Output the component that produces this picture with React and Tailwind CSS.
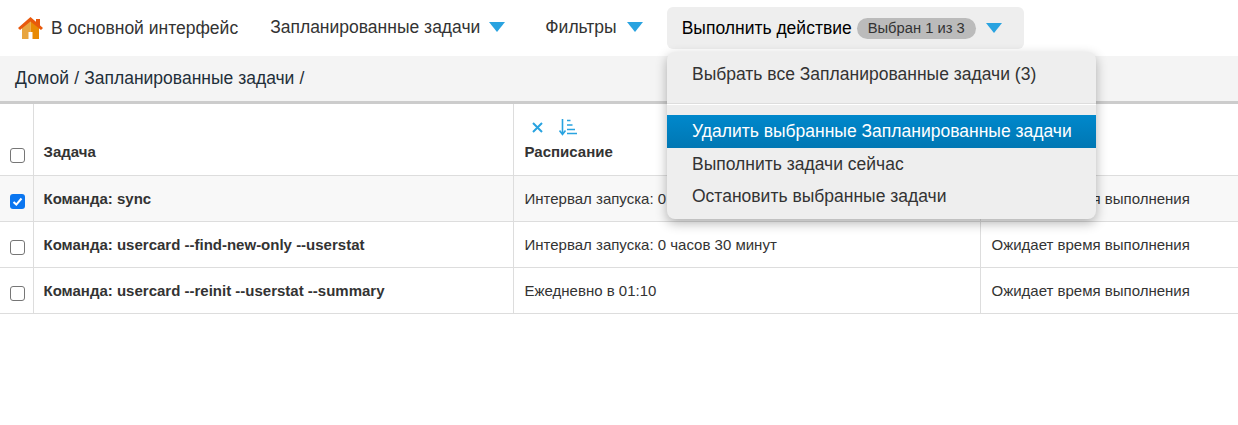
const rows = [
  { name: 'Команда: sync', schedule: 'Интервал запуска: 0 часов 5 минут', status: 'Ожидает время выполнения', checked: true },
  { name: 'Команда: usercard --find-new-only --userstat', schedule: 'Интервал запуска: 0 часов 30 минут', status: 'Ожидает время выполнения', checked: false },
  { name: 'Команда: usercard --reinit --userstat --summary', schedule: 'Ежедневно в 01:10', status: 'Ожидает время выполнения', checked: false },
];

function Caret() {
  return <span className="inline-block h-0 w-0 border-x-[8px] border-t-[10px] border-x-transparent border-t-[#29a3e0]" />;
}

function HomeIcon() {
  return (
    <svg width="25" height="22" viewBox="0 0 25 22" className="shrink-0">
      <rect x="18" y="2" width="4" height="7" fill="#e8590c" />
      <path d="M4 10 L12.5 3 V22 H4 Z" fill="#e8a53f" />
      <path d="M12.5 3 L21 10 V22 H12.5 Z" fill="#e88a05" />
      <rect x="10.5" y="15" width="4" height="7" fill="#fff" />
      <path d="M0 11 L12.5 0 L25 11 L23 13 L12.5 4.5 L2 13 Z" fill="#e8590c" />
    </svg>
  );
}

function Checkbox({ checked }) {
  if (checked) {
    return (
      <span className="flex h-[15px] w-[15px] items-center justify-center rounded-[3px] bg-[#0b76f0]">
        <svg width="11" height="11" viewBox="0 0 11 11">
          <path d="M1.5 6 L4.3 8.6 L9.5 2.5" fill="none" stroke="#fff" strokeWidth="2" />
        </svg>
      </span>
    );
  }
  return <span className="block h-[15px] w-[15px] rounded-[3px] border border-[#767676] bg-white" />;
}

function App() {
  return (
    <div className="relative h-[425px] w-[1238px] overflow-hidden bg-white font-['Liberation_Sans',Arial,sans-serif] text-[#333]">
      {/* top menu */}
      <nav className="flex h-[56px] items-start pl-[18px] text-[17.5px] leading-6">
        <a className="mt-[16px] flex items-center gap-2">
          <HomeIcon />
          <span className="text-[#333]">В основной интерфейс</span>
        </a>
        <a className="ml-8 mt-[15px] flex items-center gap-[9px]">
          Запланированные задачи <Caret />
        </a>
        <a className="ml-10 mt-[15px] flex items-center gap-[10px]">
          Фильтры <Caret />
        </a>
        <div className="ml-[24px] mt-[7px] flex h-[42px] w-[357px] items-center rounded-md bg-[#eee] pl-[15px] text-black">
          <span>Выполнить действие</span>
          <span className="ml-[5px] flex h-[21px] w-[119px] items-center justify-center rounded-full bg-[#bbb] text-[14.75px] text-[#333]">Выбран 1 из 3</span>
          <span className="ml-[10px] flex"><Caret /></span>
        </div>
      </nav>

      {/* breadcrumbs */}
      <div className="flex h-[48px] items-center border-b-[3px] border-[#ccc] bg-[#f4f4f4] pb-[1px] pl-[15px] text-[17.5px] text-[#1f2f3a]">
        <span className="tracking-[0.2px]">Домой</span>
        <span className="mx-[5px]">/</span>
        <span>Запланированные задачи</span>
        <span className="ml-[5px]">/</span>
      </div>

      {/* tasks */}
      <table className="w-[1238px] table-fixed border-collapse text-[15px]">
        <colgroup>
          <col className="w-[33px]" />
          <col className="w-[480px]" />
          <col className="w-[467px]" />
          <col />
        </colgroup>
        <thead>
          <tr className="h-[71px] border-b border-[#ddd]">
            <th className="border-r border-[#ddd] pb-[12px] pl-[10px] align-bottom font-normal">
              <Checkbox />
            </th>
            <th className="border-r border-[#ddd] px-[10px] pb-[11px] text-left align-bottom font-bold">Задача</th>
            <th className="border-r border-[#ddd] px-[11px] pb-[11px] text-left align-bottom font-bold">
              <div className="mb-[5px] flex h-[18px] items-center pl-[7px] text-[#29a3e0]">
                <svg width="11" height="11" viewBox="0 0 11 11">
                  <path d="M1 1 L10 10 M10 1 L1 10" fill="none" stroke="currentColor" strokeWidth="2" />
                </svg>
                <svg width="18" height="17" viewBox="0 0 18 17" className="ml-[16px]">
                  <path d="M3.5 0 V15 M0.5 11.5 L3.5 15.5 L6.5 11.5" fill="none" stroke="currentColor" strokeWidth="1.6" />
                  <path d="M8 1.5 H11.5 M8 6 H13.5 M8 10.5 H16 M8 14.5 H18" fill="none" stroke="currentColor" strokeWidth="1.6" />
                </svg>
              </div>
              Расписание
            </th>
            <th />
          </tr>
        </thead>
        <tbody>
          {rows.map((row) => (
            <tr key={row.name} className={`h-[46px] border-b border-[#ddd] ${row.checked ? 'bg-[#f8f8f8]' : ''}`}>
              <td className="border-r border-[#ddd] pl-[10px] pt-[7px] align-middle">
                <Checkbox checked={row.checked} />
              </td>
              <td className="border-r border-[#ddd] px-[10px] pt-[2px] font-bold">{row.name}</td>
              <td className="border-r border-[#ddd] px-[11px] pt-[2px]">{row.schedule}</td>
              <td className="px-[11px] pt-[2px]">{row.status}</td>
            </tr>
          ))}
        </tbody>
      </table>

      {/* actions dropdown */}
      <div className="absolute left-[667px] top-[52px] h-[167px] w-[429px] overflow-hidden rounded-lg bg-[#eee] text-[17.5px] text-[#333] shadow-[0_4px_12px_rgba(0,0,0,0.3)]">
        <div className="flex h-[51px] items-start pl-[25px] pt-[9px]">Выбрать все Запланированные задачи (3)</div>
        <div className="h-[2px] border-t border-[#ddd] bg-white" />
        <div className="mt-[10px] flex h-[33px] items-center bg-linear-to-b from-[#0088cc] to-[#0077b3] pl-[25px] text-white">Удалить выбранные Запланированные задачи</div>
        <div className="flex h-[32px] items-center pl-[25px]">Выполнить задачи сейчас</div>
        <div className="flex h-[32px] items-center pl-[25px]">Остановить выбранные задачи</div>
      </div>
    </div>
  );
}

export default App;
